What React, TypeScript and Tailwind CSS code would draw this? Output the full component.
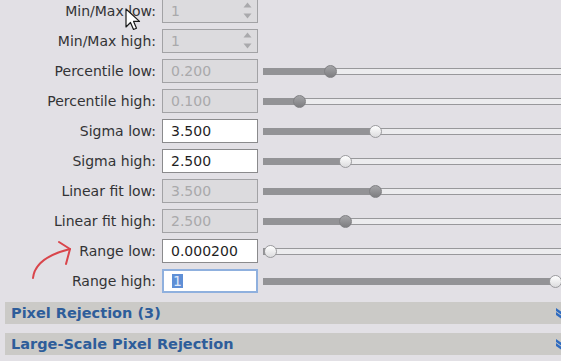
import React from "react";

type Row = {
  label: string;
  value: string;
  enabled: boolean;
  spin?: boolean;
  slider?: number | null;
  focused?: boolean;
};

const rows: Row[] = [
  { label: "Min/Max low:", value: "1", enabled: false, spin: true, slider: null },
  { label: "Min/Max high:", value: "1", enabled: false, spin: true, slider: null },
  { label: "Percentile low:", value: "0.200", enabled: false, slider: 67 },
  { label: "Percentile high:", value: "0.100", enabled: false, slider: 36 },
  { label: "Sigma low:", value: "3.500", enabled: true, slider: 112 },
  { label: "Sigma high:", value: "2.500", enabled: true, slider: 82 },
  { label: "Linear fit low:", value: "3.500", enabled: false, slider: 112 },
  { label: "Linear fit high:", value: "2.500", enabled: false, slider: 82 },
  { label: "Range low:", value: "0.000200", enabled: true, slider: 7 },
  { label: "Range high:", value: "1", enabled: true, slider: 292, focused: true },
];

function Slider({ pos, enabled }: { pos: number; enabled: boolean }) {
  return (
    <div className="relative flex-1 h-[14px] mr-[-20px]">
      <div className="absolute left-0 right-0 top-[4px] h-[7px] border-y border-[#98989b] bg-[#ececee]" />
      <div
        className="absolute left-0 top-[4px] h-[7px] bg-[#939396]"
        style={{ width: pos }}
      />
      <div
        className={
          enabled
            ? "absolute top-[1px] w-[13px] h-[13px] rounded-full border border-[#9a9a9d] bg-gradient-to-b from-[#ffffff] to-[#dcdcde]"
            : "absolute top-[1px] w-[13px] h-[13px] rounded-full border border-[#808083] bg-gradient-to-b from-[#a4a4a7] to-[#7e7e81]"
        }
        style={{ left: pos - 6.5 }}
      />
    </div>
  );
}

function Field({ row }: { row: Row }) {
  const base =
    "relative w-[96px] h-[24px] flex items-center pl-[8px] text-[14px] leading-none";
  const cls = row.focused
    ? `${base} bg-white border-2 border-[#8fb0de] pl-[7px] text-[#1f1f1f]`
    : row.enabled
    ? `${base} bg-white border border-[#8a8a8c] text-[#1f1f1f]`
    : `${base} bg-[#dcdbde] border border-[#a2a2a5] text-[#a9a9ab]`;
  return (
    <div className={cls}>
      {row.focused ? (
        <span className="bg-[#5f8fd6] text-[#dfe9f8] px-[1px]">{row.value}</span>
      ) : (
        <span>{row.value}</span>
      )}
      {row.spin && (
        <div className="absolute right-[5px] top-[2px] flex flex-col items-center gap-[5px]">
          <svg width="9" height="6" viewBox="0 0 9 6">
            <path d="M4.5 0.5 L8.5 5.5 L0.5 5.5 Z" fill="#a9a9ac" />
          </svg>
          <svg width="9" height="6" viewBox="0 0 9 6">
            <path d="M0.5 0.5 L8.5 0.5 L4.5 5.5 Z" fill="#a9a9ac" />
          </svg>
        </div>
      )}
    </div>
  );
}

function Chevrons() {
  return (
    <svg width="12" height="12" viewBox="0 0 12 12" className="shrink-0">
      <path d="M1 1 L6 4.5 L11 1 L11 4 L6 7.5 L1 4 Z" fill="#2f6bc0" />
      <path d="M1 5 L6 8.5 L11 5 L11 8 L6 11.5 L1 8 Z" fill="#2f6bc0" />
    </svg>
  );
}

function Section({ title }: { title: string }) {
  return (
    <div className="h-[22px] ml-[5px] bg-[#cbcac7] flex items-center justify-between pl-[6px] pr-0 mr-[-6px]">
      <span className="text-[14.5px] font-bold text-[#2e5d9a] leading-none">{title}</span>
      <Chevrons />
    </div>
  );
}

export default function App() {
  return (
    <div
      className="relative w-[561px] h-[361px] overflow-hidden bg-[#e2e0e5]"
      style={{ fontFamily: '"DejaVu Sans", Verdana, sans-serif' }}
    >
      <div className="flex flex-col mt-[-4px]">
        {rows.map((r) => (
          <div key={r.label} className="h-[30px] flex items-center">
            <div className="w-[156px] text-right text-[14px] text-[#333335] leading-none whitespace-nowrap">
              {r.label}
            </div>
            <div className="ml-[6px]">
              <Field row={r} />
            </div>
            {r.slider != null && (
              <div className="ml-[5px] flex-1 flex items-center">
                <Slider pos={r.slider} enabled={r.enabled} />
              </div>
            )}
          </div>
        ))}
      </div>
      <div className="mt-[6px] flex flex-col gap-[9px]">
        <Section title="Pixel Rejection (3)" />
        <Section title="Large-Scale Pixel Rejection" />
      </div>

      {/* mouse cursor */}
      <svg
        className="absolute left-[125px] top-[8px]"
        width="16"
        height="24"
        viewBox="0 0 16 24"
      >
        <path
          d="M1 1 L1 19 L5.5 14.5 L8.5 21.5 L11.5 20.2 L8.6 13.4 L14.5 13.4 Z"
          fill="#ffffff"
          stroke="#1a1a1a"
          strokeWidth="1.2"
          strokeLinejoin="round"
        />
      </svg>

      {/* red annotation arrow */}
      <svg
        className="absolute left-[28px] top-[236px]"
        width="50"
        height="50"
        viewBox="0 0 50 50"
      >
        <path
          d="M5 42 C6 32 14 20 42 13"
          fill="none"
          stroke="#d9454b"
          strokeWidth="2"
          strokeLinecap="round"
        />
        <path
          d="M31 6 L42 13 L38 28"
          fill="none"
          stroke="#d9454b"
          strokeWidth="2"
          strokeLinecap="round"
          strokeLinejoin="round"
        />
      </svg>
    </div>
  );
}
